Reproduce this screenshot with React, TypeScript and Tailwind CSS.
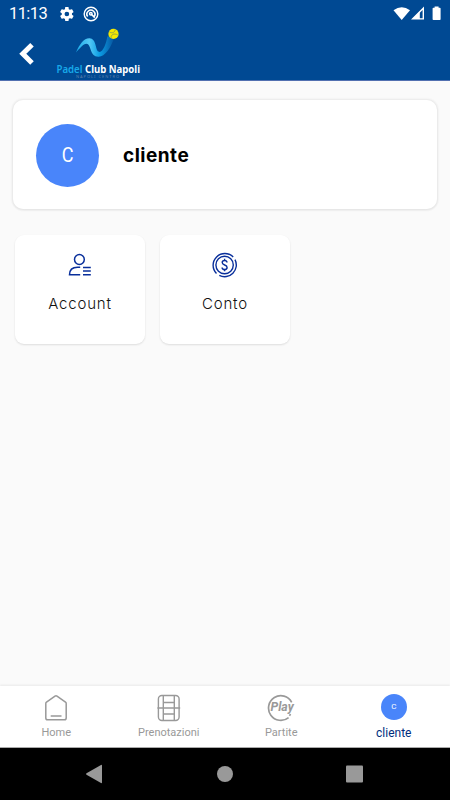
import React from 'react';

const BackIcon = () => (
  <svg className="h-6 w-5" viewBox="0 0 20 24" fill="none" stroke="white" strokeWidth="5">
    <path d="M15 2.8 5.8 11.8l9.2 9.2" />
  </svg>
);

const ClubLogo = () => (
  <svg className="h-[53px] w-24 overflow-visible font-['Noto_Sans',sans-serif]" viewBox="0 0 96 53">
    <defs>
      <linearGradient id="wave" x1="26" y1="0" x2="64" y2="0" gradientUnits="userSpaceOnUse">
        <stop offset="0" stopColor="#19a9e8" />
        <stop offset="0.35" stopColor="#54c8f5" />
        <stop offset="0.62" stopColor="#0b9de5" />
        <stop offset="1" stopColor="#07559f" />
      </linearGradient>
    </defs>
    <path
      d="M26 25.6C29.5 17 34 11 39.5 11.2c7.1.3 5.6 11.3 9 13.4 3.8 2.2 7.8-7.7 8.8-15.1l7.6-.7C61 21.4 54.8 29.6 48.8 29.8 39.3 30.2 41.6 16.8 36.4 16.8c-3.1 0-7.1 5.1-10.4 8.8z"
      fill="url(#wave)"
    />
    <circle cx="63.5" cy="6.9" r="5.1" fill="#f4e800" />
    <path d="M59.5 5c3.4 2 5.6-.3 5.8-2.8M61 11c0-3.7 3.1-5 6.7-3.1" fill="none" stroke="#8da04b" strokeWidth="0.9" />
    <text x="6.5" y="45.6" fontSize="11" fontWeight="600" fill="#17a8e9" textLength="26" lengthAdjust="spacingAndGlyphs">
      Padel
    </text>
    <text x="35" y="45.6" fontSize="11" fontWeight="700" fill="white" textLength="55" lengthAdjust="spacingAndGlyphs">
      Club Napoli
    </text>
    <text x="26" y="51.4" fontSize="4" fill="#5e80aa" textLength="43">
      NAPOLI CENTRO
    </text>
  </svg>
);

const StatusBar = () => (
  <div className="flex h-[27px] items-center pl-[9px] text-white">
    <span className="w-[50px] text-[16.5px] leading-[27px] tracking-[-0.6px]">11:13</span>
    <svg className="h-4 w-4" viewBox="0 0 24 24" fill="currentColor">
      <path d="M19.4 13c.1-.6.1-1.4 0-2l2.2-1.7c.2-.2.2-.4.1-.7l-2.1-3.6c-.1-.2-.4-.3-.6-.2l-2.6 1a8 8 0 0 0-1.7-1L14.3 2c0-.2-.2-.4-.5-.4h-4c-.3 0-.5.2-.5.4l-.4 2.8a8 8 0 0 0-1.7 1l-2.6-1c-.2-.1-.5 0-.6.2L1.9 8.6c-.1.3-.1.5.1.7L4.2 11c-.1.6-.1 1.4 0 2L2 14.7c-.2.2-.2.4-.1.7L4 19c.1.2.4.3.6.2l2.6-1c.5.4 1.1.8 1.7 1l.4 2.8c0 .2.2.4.5.4h4c.3 0 .5-.2.5-.4l.4-2.8a8 8 0 0 0 1.7-1l2.6 1c.2.1.5 0 .6-.2l2.1-3.6c.1-.3.1-.5-.1-.7L19.4 13zM11.8 15.5a3.5 3.5 0 1 1 0-7 3.5 3.5 0 0 1 0 7z" />
    </svg>
    <svg className="ml-2 h-4 w-4" viewBox="0 0 16 16" fill="none" stroke="currentColor">
      <circle cx="8" cy="8" r="6.8" strokeWidth="1.4" />
      <path d="M4.7 10.6a4 4 0 1 1 6.4 0M7.5 7.5l4.3 4.1" strokeWidth="1.6" />
      <circle cx="7.8" cy="7.8" r="1.4" strokeWidth="1.2" />
    </svg>
    <svg className="ml-auto mr-2 h-[15px] w-[50px]" viewBox="0 0 50 15">
      <path d="M1.5 4.3Q9.7-1.6 18 4.3L9.7 14z" fill="currentColor" />
      <path d="M31.3 2.3v10.6H20.7z" fill="none" stroke="currentColor" strokeWidth="1.4" />
      <path d="M27.8 5.5v7.6h-7.4z" fill="currentColor" />
      <path d="M42.6.5h4v1.3h1.2q.8 0 .8.8v10.6q0 .8-.8.8h-6.4q-.8 0-.8-.8V2.6q0-.8.8-.8h1.2z" fill="currentColor" />
    </svg>
  </div>
);

const AccountIcon = () => (
  <svg className="h-6 w-6" viewBox="0 0 24 24" fill="none" stroke="#092f9b" strokeWidth="1.5">
    <circle cx="11.4" cy="6.5" r="4.9" />
    <path d="M12.2 14.3H9.5c-5 0-8 2.7-8 7.5h10.7M15 14.4h7.8M15 18.1h7.8M15 21.8h7.8" />
  </svg>
);

const CoinIcon = () => (
  <svg className="h-[26px] w-[26px]" viewBox="0 0 26 26" fill="none" stroke="#092f9b" strokeWidth="1.4">
    <circle cx="12.6" cy="13" r="8.7" />
    <path d="M21.2 5A11.7 11.7 0 0 0 4.5 21.5M7.3 23.4A11.7 11.7 0 0 0 23 7.6" />
    <path d="M15 10.5c-.1-1.3-1-2-2.4-2-1.5 0-2.4.8-2.4 2.1 0 3 4.9 1.8 4.9 4.8 0 1.3-1 2.1-2.5 2.1s-2.5-.8-2.5-2.1M12.6 6.7v1.8M12.6 17.5v1.8" />
  </svg>
);

const HomeIcon = () => (
  <svg className="h-7 w-6" viewBox="0 0 24 28" fill="none" stroke="#999" strokeWidth="1.5" strokeLinejoin="round">
    <path d="M1.8 9.5Q1.8 8.7 2.5 8.2L11 2.1q1-.7 2 0l8.5 6.1q.7.5.7 1.3V24q0 1.8-1.8 1.8H3.6Q1.8 25.8 1.8 24zM6.7 21.9h10.8" />
  </svg>
);

const CourtIcon = () => (
  <svg className="h-7 w-6" viewBox="0 0 24 28" fill="none" stroke="#999" strokeWidth="1.4">
    <rect x="1.4" y="1.5" width="20.7" height="25" rx="3.5" />
    <path d="M6.3 1.5v25M17.3 1.5v25M.4 14h22.8M6.3 8.5h11M6.3 20h11" />
  </svg>
);

const PlayIcon = () => (
  <svg className="h-7 w-7" viewBox="0 0 28 28">
    <path d="M24.7 8.3A12.3 12.3 0 1 0 21.6 23.6" fill="none" stroke="#999" strokeWidth="1.7" />
    <path d="m22.4 21.8 1.2-1.7" stroke="#999" strokeWidth="1.6" />
    <text x="3.5" y="17.2" fontSize="12" fontWeight="700" fontStyle="italic" fill="#999" textLength="23.2" lengthAdjust="spacingAndGlyphs" className="font-[Roboto,sans-serif]">
      Play
    </text>
  </svg>
);

const tiles = [
  { label: 'Account', icon: <AccountIcon /> },
  { label: 'Conto', icon: <CoinIcon /> },
];

const tabs = [
  { label: 'Home', icon: <HomeIcon /> },
  { label: 'Prenotazioni', icon: <CourtIcon /> },
  { label: 'Partite', icon: <PlayIcon /> },
];

const App: React.FC = () => {
  return (
    <div className="flex h-screen w-full flex-col overflow-hidden bg-[#fafafa] font-[Roboto,sans-serif]">
      <header className="h-[81px] shrink-0 border-b border-[#5270b0] bg-[#004993]">
        <StatusBar />
        <div className="flex">
          <button className="ml-[17px] mr-[13px] flex h-[53px] items-center" aria-label="Indietro">
            <BackIcon />
          </button>
          <ClubLogo />
        </div>
      </header>

      <main className="flex-1 px-[13px] pt-[19px]">
        <div className="flex h-[109px] items-center rounded-[10px] bg-white pl-[23px] pt-px shadow-[0_0_2px_1px_#e8e8e8,0_1px_2px_#dedede]">
          <div className="flex h-[63px] w-[63px] items-center justify-center rounded-full bg-[#4985fa] text-[20px] text-white">
            <span className="scale-x-90">C</span>
          </div>
          <span className="ml-6 pt-0.5 font-[Inter,sans-serif] text-[19px] font-bold tracking-[0.5px] text-black">cliente</span>
        </div>

        <div className="ml-[2px] mt-[26px] flex gap-[15px]">
          {tiles.map((tile) => (
            <div key={tile.label} className="flex h-[109px] w-[130px] flex-col items-center rounded-[9px] bg-white pt-4 shadow-[0_1px_2px_#dddddd]">
              <div className="flex h-[27px] items-center">{tile.icon}</div>
              <span className="mt-[14px] font-[Inter,sans-serif] text-[15px] font-light leading-6 tracking-[0.8px] text-[#111]">{tile.label}</span>
            </div>
          ))}
        </div>
      </main>

      <nav className="grid h-[61px] shrink-0 grid-cols-4 bg-white shadow-[0_-1px_2px_#e9e9e9]">
        {tabs.map((tab) => (
          <div key={tab.label} className="flex flex-col items-center pt-2">
            {tab.icon}
            <span className="mt-[3px] text-[11px] leading-4 text-[#999]">{tab.label}</span>
          </div>
        ))}
        <div className="flex flex-col items-center pt-2">
          <div className="flex h-[26px] w-[26px] items-center justify-center rounded-full bg-[#4985fa] text-[8px] text-white">C</div>
          <span className="mt-[5px] text-[12px] leading-4 text-[#002d7d]">cliente</span>
        </div>
      </nav>

      <div className="h-[53px] shrink-0 border-t border-[#aaa] bg-black">
        <svg className="h-full w-full" viewBox="0 0 450 52" fill="#999">
          <path d="M86.5 25.2 101 17q1-.5 1 .7v16.6q0 1.2-1 .7l-14.5-8.2q-1-.8 0-1.6z" />
          <circle cx="225" cy="26" r="8" />
          <rect x="346" y="17.5" width="17" height="17" rx="1" />
        </svg>
      </div>
    </div>
  );
};

export default App;
